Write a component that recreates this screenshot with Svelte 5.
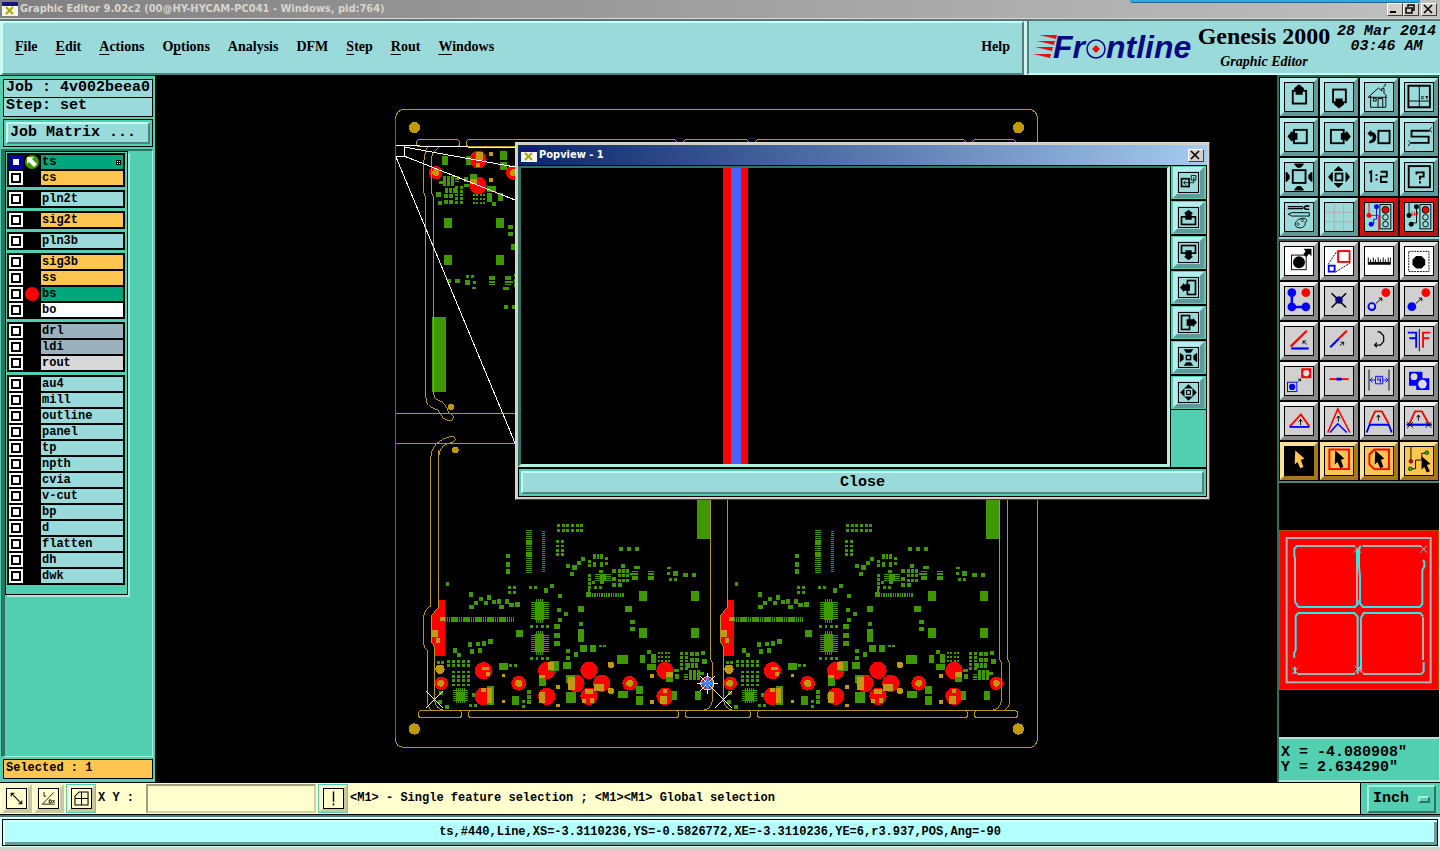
<script lang="ts">
  type Layer = { name: string; tone: string; mark?: string };

  const menus = [
    ['', 'F', 'ile'], ['', 'E', 'dit'], ['', 'A', 'ctions'], ['O', 'p', 'tions'],
    ['Analysis', '', ''], ['DFM', '', ''], ['', 'S', 'tep'], ['', 'R', 'out'], ['', 'W', 'indows']
  ];

  const plain = (names: string[]): Layer[] => names.map((name) => ({ name, tone: 'aqua' }));

  const groups: Layer[][] = [
    [{ name: 'ts', tone: 'green', mark: 'work' }, { name: 'cs', tone: 'orange' }],
    [{ name: 'pln2t', tone: 'aqua' }],
    [{ name: 'sig2t', tone: 'orange' }],
    [{ name: 'pln3b', tone: 'aqua' }],
    [
      { name: 'sig3b', tone: 'orange' }, { name: 'ss', tone: 'orange' },
      { name: 'bs', tone: 'green', mark: 'red' }, { name: 'bo', tone: 'white' }
    ],
    [{ name: 'drl', tone: 'slate' }, { name: 'ldi', tone: 'slate' }, { name: 'rout', tone: 'grey' }],
    plain(['au4', 'mill', 'outline', 'panel', 'tp', 'npth', 'cvia', 'v-cut', 'bp', 'd', 'flatten', 'dh', 'dwk'])
  ];

  // icon bodies, all drawn on a 90 x 90 grid
  const cursor = '33,11 63,38 51,41 59,64 49,68 40,48 31,56';
  const light = `<rect x="48" y="5" width="35" height="78" fill="none" stroke="#000" stroke-width="3"/>
    <circle cx="66" cy="22" r="11" fill="#f00" stroke="#000" stroke-width="3"/>
    <circle cx="66" cy="46" r="9" fill="none" stroke="#000" stroke-width="3"/>
    <circle cx="66" cy="68" r="9" fill="none" stroke="#000" stroke-width="3"/>`;
  const upArrow = (x: number, y: number) =>
    `<path d="M${x} ${y + 18}V${y}M${x - 6} ${y + 7}L${x} ${y}L${x + 6} ${y + 7}" fill="none" stroke="#000" stroke-width="3"/>`;
  const trapezoid = '<path d="M14 54L32 14H54L76 54" fill="none" stroke="#f00" stroke-width="6"/>';
  const diagonal = '<path d="M35 53L54 36M44 36H54V46" fill="none" stroke="#000" stroke-width="3"/>';

  const icons: Record<string, string> = {
    up: '<rect x="25" y="25" width="43" height="41" fill="none" stroke="#000" stroke-width="6"/><path d="M45 4L61 17V22H57V38H34V22H29V17Z"/>',
    down: '<rect x="26" y="21" width="41" height="41" fill="none" stroke="#000" stroke-width="6"/><path d="M45 82L61 69V64H57V50H34V64H29V69Z"/>',
    left: '<rect x="29" y="22" width="41" height="43" fill="none" stroke="#000" stroke-width="6"/><path d="M8 43L20 27H25V32H40V54H25V59H20Z"/>',
    right: '<rect x="19" y="22" width="41" height="43" fill="none" stroke="#000" stroke-width="6"/><path d="M83 43L71 27H66V32H51V54H66V59H71Z"/>',
    home: '<path d="M10 46L43 16L54 26V17H61V33L70 42M18 42V78H67V42M10 46H70M42 78V50H57V78M27 49H36V58H27ZM59 12L66 8M63 6L68 3" fill="none" stroke="#000" stroke-width="3"/>',
    xy: '<path d="M11 9H80V78H11Z" fill="none" stroke="#000" stroke-width="6"/><path d="M46 10V78M11 58H80" stroke="#000" stroke-width="3"/><path d="M52 42L60 52M60 42L52 52M66 42L70 47L75 42M70 47V52" stroke="#000" stroke-width="3"/>',
    back: '<rect x="43" y="25" width="36" height="40" fill="none" stroke="#000" stroke-width="6"/><path d="M8 34L20 22V29C38 29 42 52 28 62L14 66V57C26 54 28 42 20 39V46Z"/>',
    snake: '<path d="M79 25H21V44H76V64H18" fill="none" stroke="#000" stroke-width="6"/><path d="M86 14L79 22L87 30M10 56L18 64L10 74" fill="none" stroke="#000" stroke-width="3"/>',
    fit: '<rect x="25" y="23" width="41" height="41" fill="none" stroke="#000" stroke-width="6"/><path d="M30 2H60V6L50 15H40L30 6ZM30 88H60V84L50 74H40L30 84ZM2 29H6L15 39V50L6 60H2ZM88 29H84L75 39V50L84 60H88Z"/>',
    centre: '<rect x="34" y="34" width="22" height="22" fill="none" stroke="#000" stroke-width="6"/><path d="M43 10L58 23V26H29V23ZM43 80L58 67V64H29V67ZM10 45L22 30H25V60H22ZM80 45L69 30H66V60H69Z"/>',
    ratio: '<path d="M13 31L20 27V62M37 36V42M37 50V56M50 28H70V44H51V61H72" fill="none" stroke="#000" stroke-width="6"/>',
    help: '<rect x="12" y="10" width="68" height="68" fill="none" stroke="#000" stroke-width="6"/><path d="M37 37V30H60V44H48V54M48 58V66" fill="none" stroke="#000" stroke-width="6"/>',
    tools: '<path d="M9 12H58M9 18H58" stroke="#000" stroke-width="4"/><path d="M78 10H66L61 15L66 20H78" fill="none" stroke="#000" stroke-width="5"/><path d="M10 36L22 31H78V42H22Z" fill="none" stroke="#000" stroke-width="3"/><path d="M36 60C44 46 72 46 70 58C60 60 70 68 60 76C46 86 24 76 36 60Z" fill="none" stroke="#000" stroke-width="3"/><circle cx="42" cy="68" r="4" fill="none" stroke="#000" stroke-width="2"/><circle cx="56" cy="56" r="4" fill="none" stroke="#000" stroke-width="2"/>',
    grid: '<path d="M30 0V90M60 0V90M0 30H90M0 60H90" stroke="#b9a9a9" stroke-width="3"/>',
    netRed: `<path d="M13 0V40H44V90" fill="none" stroke="#f00" stroke-width="3"/><path d="M37 12V52H28V68H20" fill="none" stroke="#00f" stroke-width="3"/><circle cx="13" cy="40" r="8" fill="#f00"/><circle cx="37" cy="12" r="8" fill="#00f"/><circle cx="20" cy="68" r="8" fill="#00f"/>${light}`,
    netBlack: `<path d="M13 0V40M37 12V64H20" fill="none" stroke="#000" stroke-width="3"/><path d="M20 38H40M22 28V38M31 28V38M40 28V38" stroke="#f00" stroke-width="3"/><circle cx="13" cy="40" r="8"/><circle cx="37" cy="12" r="8"/><circle cx="20" cy="68" r="8"/>${light}`,
    pad: '<rect x="21" y="26" width="47" height="47" fill="none" stroke="#000" stroke-width="3"/><circle cx="45" cy="49" r="19"/><path d="M59 24L66 14L60 6H85V30L78 22L68 32Z"/>',
    scale: '<rect x="42" y="13" width="37" height="35" fill="none" stroke="#f00" stroke-width="6"/><rect x="12" y="60" width="19" height="19" fill="none" stroke="#00f" stroke-width="6"/><path d="M10 56L38 14M34 80L80 52" stroke="#000" stroke-width="3" stroke-dasharray="7 3"/>',
    ruler: '<path d="M9 57V34H12V48H16V40H19V48H25V34H28V48H32V40H35V48H41V34H44V48H48V40H51V48H57V34H60V48H64V40H67V48H73V34H76V48H80V34H83V57Z"/>',
    select: '<rect x="12" y="14" width="65" height="65" fill="none" stroke="#000" stroke-width="3" stroke-dasharray="6 3"/><path d="M36 29H53L65 41V57L53 69H36L24 57V41Z"/>',
    corner: '<path d="M22 18V64H67" fill="none" stroke="#00f" stroke-width="8"/><circle cx="22" cy="18" r="14" fill="#00f"/><circle cx="22" cy="64" r="14" fill="#00f"/><circle cx="67" cy="64" r="14" fill="#00f"/><circle cx="67" cy="18" r="14" fill="#f00"/>',
    remove: '<circle cx="45" cy="42" r="12" fill="#00f"/><path d="M21 20L68 66M68 20L21 66" stroke="#000" stroke-width="5"/>',
    copy: `<circle cx="22" cy="63" r="11" fill="none" stroke="#00f" stroke-width="6"/><circle cx="67" cy="18" r="14" fill="#f00"/>${diagonal}`,
    move: `<circle cx="22" cy="63" r="14" fill="#00f"/><circle cx="67" cy="18" r="14" fill="#f00"/>${diagonal}`,
    angle: '<path d="M18 63L70 12" stroke="#f00" stroke-width="7"/><path d="M20 69H76" stroke="#00f" stroke-width="7"/><path d="M70 56L58 46M58 55V45H68" fill="none" stroke="#000" stroke-width="3"/>',
    stretch: '<path d="M45 37L70 12" stroke="#f00" stroke-width="7"/><path d="M17 65L45 37" stroke="#00f" stroke-width="7"/><path d="M48 60L60 49M50 49H60V59" fill="none" stroke="#000" stroke-width="3"/>',
    rotate: '<path d="M40 16H48L60 28V46L50 58H31M38 50L31 58L38 65" fill="none" stroke="#000" stroke-width="4"/>',
    mirror: '<path d="M9 18H36V67M14 36H36" fill="none" stroke="#00f" stroke-width="6"/><path d="M46 6V78" stroke="#000" stroke-width="3"/><path d="M82 18H58V67M78 36H58" fill="none" stroke="#f00" stroke-width="6"/>',
    swap: '<rect x="52" y="4" width="32" height="32" fill="#f00"/><circle cx="68" cy="20" r="10" fill="#ddd"/><rect x="8" y="49" width="30" height="30" fill="none" stroke="#00f" stroke-width="3"/><circle cx="23" cy="64" r="10" fill="#00f"/><path d="M40 48L50 39M43 39H50V46" fill="none" stroke="#000" stroke-width="3"/>',
    segment: '<path d="M14 39H76" stroke="#f00" stroke-width="6"/><path d="M37 39H53" stroke="#00f" stroke-width="9"/>',
    spacing: '<path d="M13 8V76M77 8V76" stroke="#000" stroke-width="3"/><path d="M16 42H34M57 42H74M24 34L16 42L24 50M66 34L74 42L66 50M34 30H57V54H34ZM41 33V42H51M49 33V51" fill="none" stroke="#00f" stroke-width="3"/>',
    merge: '<path d="M13 15H56V36H78V74H36V60H13Z" fill="#00f"/><circle cx="29" cy="31" r="11" fill="#ddd"/><circle cx="56" cy="55" r="14" fill="#ddd"/>',
    peakLow: `<path d="M15 63L51 24L79 63" fill="none" stroke="#f00" stroke-width="6"/><path d="M15 64H78" stroke="#00f" stroke-width="6"/>${upArrow(50, 40)}`,
    peakHigh: `<path d="M9 82L41 6L80 82" fill="none" stroke="#f00" stroke-width="5"/><path d="M16 82L41 54L70 82" fill="none" stroke="#00f" stroke-width="5"/>${upArrow(43, 29)}`,
    trapTail: `${trapezoid}<path d="M5 82L15 57H76L86 82" fill="none" stroke="#00f" stroke-width="6"/>${upArrow(43, 26)}`,
    trapLine: `${trapezoid}<path d="M5 57H86" stroke="#00f" stroke-width="7"/><path d="M7 48L26 67M26 48L7 67M66 48L85 67M85 48L66 67" stroke="#000" stroke-width="3"/>${upArrow(43, 26)}`,
    pick: `<rect width="90" height="90"/><polygon points="${cursor}" fill="#ffc64f"/>`,
    pickBox: `<rect x="14" y="8" width="63" height="63" fill="none" stroke="#f00" stroke-width="6"/><polygon points="${cursor}"/>`,
    pickPoly: `<path d="M30 8H77V71H30L14 56V24Z" fill="none" stroke="#f00" stroke-width="6"/><polygon points="${cursor}"/>`,
    pickNet: '<path d="M19 0V44M17 70H34V42H54V20H70" fill="none" stroke="#000" stroke-width="3"/><circle cx="19" cy="46" r="6" fill="#f00" stroke="#000" stroke-width="2"/><circle cx="17" cy="70" r="6" fill="#0c0" stroke="#000" stroke-width="2"/><circle cx="70" cy="18" r="6" fill="#0c0" stroke="#000" stroke-width="2"/><polygon points="54,30 82,55 70,58 80,78 70,82 62,64 53,72"/>',
    popview: '<rect x="12" y="27" width="36" height="37" fill="none" stroke="#000" stroke-width="8"/><path d="M58 12H80V34H58ZM70 20V46H22M32 36L22 46L32 56" fill="none" stroke="#000" stroke-width="4"/>',
    popUp: '<rect x="12" y="42" width="66" height="36" fill="none" stroke="#000" stroke-width="8"/><path d="M45 8L68 26H60V56H30V26H22Z"/>',
    popDown: '<rect x="12" y="12" width="66" height="36" fill="none" stroke="#000" stroke-width="8"/><path d="M45 82L68 64H60V34H30V64H22Z"/>',
    popLeft: '<rect x="40" y="12" width="38" height="66" fill="none" stroke="#000" stroke-width="8"/><path d="M5 45L24 22V30H52V60H24V68Z"/>',
    popRight: '<rect x="12" y="12" width="38" height="66" fill="none" stroke="#000" stroke-width="8"/><path d="M85 45L66 22V30H36V60H66V68Z"/>',
    popFit: '<rect x="35" y="35" width="20" height="20" fill="none" stroke="#000" stroke-width="7"/><path d="M22 6H68L56 22H34ZM22 84H68L56 68H34ZM4 22L22 36V54L4 68ZM86 22L68 36V54L86 68Z"/>',
    popCentre: '<rect x="36" y="36" width="18" height="18" fill="none" stroke="#000" stroke-width="5"/><path d="M45 6L66 26H24ZM45 84L66 64H24ZM6 45L26 24V66ZM84 45L64 24V66Z"/>',
    extent: '<path d="M20 20L70 70M20 36V20H36M70 54V70H54" fill="none" stroke="#000" stroke-width="5"/>',
    slope: '<path d="M16 72L70 16M16 72H74M24 14V34H34M48 52H58V66H48ZM64 52L74 66M74 52L64 66" fill="none" stroke="#000" stroke-width="4"/>',
    mesh: '<path d="M14 76V34L34 14H76V76ZM45 14V76M14 45H76" fill="none" stroke="#000" stroke-width="5"/>',
    bang: '<path d="M45 12V60M45 68V78" stroke="#000" stroke-width="7"/>'
  };

  const viewTools = [
    'up', 'down', 'home', 'xy', 'left', 'right', 'back', 'snake',
    'fit', 'centre', 'ratio', 'help', 'tools', 'grid', 'netRed', 'netBlack'
  ];
  const editTools = [
    'pad', 'scale', 'ruler', 'select', 'corner', 'remove', 'copy', 'move',
    'angle', 'stretch', 'rotate', 'mirror', 'swap', 'segment', 'spacing', 'merge',
    'peakLow', 'peakHigh', 'trapTail', 'trapLine', 'pick', 'pickBox', 'pickPoly', 'pickNet'
  ];
  const popTools = ['popview', 'popUp', 'popDown', 'popLeft', 'popRight', 'popFit', 'popCentre'];

  function toolTone(i: number) {
    if (i < 4) return 'white';
    return i < 20 ? 'grey' : 'orange';
  }

  // board copper: x, y, width, height in thirds of a screen pixel
  const copper: number[][] = [
    [921, -108, 41, 225], [348, 162, 12, 12], [348, 187, 12, 13], [348, 208, 12, 13], [168, 246, 9, 12],
    [687, 142, 12, 11], [711, 142, 12, 11], [735, 142, 12, 11],
    [747, 273, 24, 30], [903, 273, 24, 30], [747, 384, 24, 30], [903, 384, 24, 30],
    [705, 318, 21, 18], [564, 318, 18, 18], [721, 360, 14, 12], [721, 381, 14, 12], [567, 366, 12, 12],
    [564, 387, 18, 39], [570, 435, 21, 21], [600, 435, 18, 21], [627, 435, 8, 6], [639, 435, 9, 6],
    [378, 390, 21, 21], [492, 372, 18, 15], [492, 399, 18, 15], [492, 423, 18, 15],
    [528, 192, 12, 12], [546, 195, 15, 14], [561, 183, 12, 12], [573, 171, 12, 12], [540, 216, 12, 12],
    [480, 252, 12, 12], [462, 264, 12, 14], [504, 282, 12, 12], [501, 324, 12, 12], [522, 336, 12, 12],
    [504, 354, 12, 12], [528, 447, 12, 12], [528, 468, 12, 12], [552, 456, 12, 15],
    [237, 276, 12, 14], [252, 303, 12, 12], [267, 291, 12, 12], [291, 286, 12, 13], [282, 303, 12, 12],
    [306, 300, 12, 12], [321, 297, 12, 14], [345, 297, 12, 14], [327, 315, 15, 12], [357, 309, 15, 12],
    [375, 306, 15, 15], [237, 315, 15, 12], [234, 427, 12, 13], [258, 427, 12, 12], [276, 424, 12, 14],
    [294, 417, 15, 15], [240, 448, 12, 13], [264, 445, 12, 13], [189, 445, 12, 13], [201, 459, 12, 12],
    [354, 258, 8, 9], [369, 258, 8, 9], [354, 273, 8, 9], [369, 273, 8, 9], [418, 258, 8, 8], [432, 258, 8, 8],
    [609, 163, 9, 14], [621, 163, 6, 14], [630, 163, 9, 14], [609, 186, 10, 15], [629, 186, 10, 15],
    [594, 180, 9, 8], [594, 192, 9, 8], [645, 171, 9, 8], [645, 186, 9, 8], [627, 210, 12, 9],
    [630, 222, 18, 18], [594, 222, 8, 10], [594, 234, 8, 10], [594, 246, 8, 9], [594, 258, 8, 8], [594, 268, 6, 12],
    [606, 243, 9, 9], [630, 243, 12, 9], [612, 258, 9, 9], [627, 258, 8, 8],
    [666, 207, 12, 12], [666, 231, 12, 12], [666, 249, 12, 12], [684, 249, 12, 12], [693, 192, 12, 12],
    [726, 213, 18, 4], [720, 220, 24, 4], [726, 228, 18, 12], [732, 198, 18, 9],
    [774, 213, 18, 3], [774, 220, 18, 4], [774, 228, 18, 12],
    [831, 201, 12, 6], [831, 216, 9, 9], [849, 213, 15, 14], [879, 219, 15, 12], [906, 219, 12, 12],
    [837, 235, 9, 9], [852, 235, 9, 9],
    [327, 489, 27, 21], [357, 492, 9, 9], [372, 492, 9, 9], [519, 486, 24, 20], [480, 483, 27, 30],
    [447, 522, 20, 36], [528, 525, 27, 24], [528, 576, 30, 33], [366, 588, 21, 27], [291, 558, 21, 56],
    [411, 570, 12, 12], [411, 585, 12, 12], [411, 600, 12, 12], [396, 600, 9, 8], [396, 615, 9, 8],
    [681, 465, 33, 27], [684, 573, 30, 21], [738, 558, 21, 24], [738, 588, 21, 27], [750, 465, 15, 24],
    [771, 450, 12, 12], [783, 462, 15, 27], [771, 492, 27, 18], [828, 525, 21, 20], [846, 573, 15, 27],
    [915, 573, 18, 27], [936, 477, 15, 15], [934, 453, 11, 12], [901, 455, 12, 12], [916, 455, 12, 12],
    [900, 473, 12, 12], [916, 473, 12, 12], [889, 490, 10, 14], [902, 490, 10, 14], [915, 490, 10, 14],
    [852, 507, 15, 9], [855, 522, 12, 14], [882, 522, 12, 4], [882, 529, 12, 4], [882, 536, 12, 4],
    [897, 510, 8, 30], [909, 510, 8, 30], [921, 510, 8, 30], [930, 516, 12, 10],
    [141, 483, 9, 9], [153, 483, 9, 9], [147, 573, 12, 12], [144, 600, 12, 12], [165, 615, 12, 12],
    [237, 612, 9, 9], [252, 612, 9, 9], [201, 576, 21, 24], [247, 578, 14, 14]
  ];

  function grid(x: number, y: number, cols: number, rows: number, dx: number, dy: number, w: number, h: number) {
    for (let r = 0; r < rows; r++) {
      for (let c = 0; c < cols; c++) copper.push([x + c * dx, y + r * dy, w, h]);
    }
  }

  grid(408, 90, 1, 22, 0, 6, 18, 4);
  grid(408, 123, 1, 2, 0, 32, 18, 12);
  grid(456, 93, 1, 21, 0, 6, 9, 4);
  grid(501, 73, 6, 2, 14, 15, 9, 8);
  grid(498, 121, 2, 4, 15, 13, 8, 8);
  grid(165, 351, 35, 1, 6, 0, 3, 15);
  grid(186, 351, 5, 1, 36, 0, 17, 15);
  grid(588, 277, 3, 1, 5, 0, 5, 14);
  grid(606, 279, 14, 1, 7, 0, 4, 12);
  grid(684, 208, 3, 3, 12, 14, 9, 10);
  for (const y of [306, 403]) {
    copper.push([435, y, 27, 54]);
    grid(423, y + 1, 1, 9, 0, 6, 12, 3);
    grid(462, y + 1, 1, 9, 0, 6, 15, 3);
    grid(438, y - 9, 4, 1, 6, 0, 3, 72);
    grid(421, y + 69, 4, 1, 16, 0, 8, 9);
  }
  grid(615, 222, 1, 4, 0, 6, 48, 3);
  grid(190, 570, 1, 6, 0, 6, 44, 3);
  grid(198, 564, 5, 1, 6, 0, 3, 46);
  grid(171, 480, 5, 2, 15, 13, 8, 8);
  grid(186, 512, 4, 4, 15, 13, 8, 8);
  grid(804, 457, 4, 3, 10, 12, 6, 6);
  grid(871, 457, 2, 5, 13, 11, 9, 8);

  const reds = [
    [280, 512, 26], [280, 589, 26], [386, 550, 22], [470, 512, 26], [470, 589, 26], [558, 550, 26], [597, 511, 26],
    [635, 550, 26], [597, 589, 26], [719, 550, 22], [825, 512, 26], [825, 589, 26], [154, 550, 20], [952, 550, 20]
  ];
  const drills = [
    [150, 508, 14], [152, 550, 10], [386, 550, 11], [663, 495, 10], [663, 573, 10], [719, 550, 10], [952, 550, 10]
  ];
  const overlaps = [
    [125, 390, 19, 21], [137, 414, 13, 15], [150, 351, 14, 12], [276, 501, 20, 9], [288, 516, 12, 12],
    [273, 563, 15, 12], [291, 565, 15, 44], [336, 521, 9, 11], [336, 599, 9, 11], [473, 487, 20, 24],
    [447, 525, 18, 10], [447, 576, 18, 34], [498, 555, 12, 12], [498, 612, 12, 9], [535, 531, 20, 38],
    [612, 552, 30, 22], [586, 567, 22, 15], [576, 598, 12, 12], [600, 594, 12, 15], [780, 522, 12, 12],
    [780, 600, 12, 12], [819, 567, 12, 12], [810, 588, 21, 24], [828, 516, 20, 16]
  ];
  const slots = [[418, 461], [468, 678], [685, 750], [757, 967], [974, 1017]];
</script>

{#snippet icon(name: string)}
  <svg class="icon" viewBox="0 0 90 90" aria-hidden="true">{@html icons[name]}</svg>
{/snippet}

{#snippet appMark()}
  <svg class="app-mark" viewBox="0 0 16 14" aria-hidden="true">
    <rect width="16" height="14" fill="#f4f4f4" />
    <rect width="16" height="4" fill="#15157a" />
    <path d="M4 5L11 12M11 5L4 12" stroke="#a8a800" stroke-width="2" />
  </svg>
{/snippet}

{#snippet board()}
  <path d="M146 300H165V467H134V440L125 427V347L146 320Z" fill="#f00" />
  {#each reds as [x, y, r]}<circle cx={x} cy={y} {r} fill="#f00" />{/each}
  {#each copper as [x, y, w, h]}<rect {x} {y} width={w} height={h} fill="#409800" />{/each}
  <g fill="#f00">
    <path d="M254 512a26 26 0 0 1 52 0v10h-52ZM444 512a26 26 0 0 1 30-25v50a26 26 0 0 1-30-25ZM254 589a26 26 0 0 1 37-24v48a26 26 0 0 1-37-24Z" />
    <path d="M555 525h10l14 14-8 30-16 6ZM800 512a26 26 0 0 1 50-5l-4 14-20 8-14 5Z" />
  </g>
  {#each overlaps as [x, y, w, h]}<rect {x} {y} width={w} height={h} fill="#c09a10" />{/each}
  {#each drills as [x, y, r]}<circle cx={x} cy={y} {r} fill="#c09a00" />{/each}
{/snippet}

{#snippet outline()}
  <path d="M146 -150V320L125 347V427L134 440V600Q136 625 160 631H940Q962 628 967 604V487L961 475V-150" />
{/snippet}

<div class="app">
  <header class="titlebar">
    {@render appMark()}
    <h1>Graphic Editor 9.02c2 (00@HY-HYCAM-PC041 - Windows, pid:764)</h1>
    <div class="window-buttons">
      <button aria-label="Minimize"><svg viewBox="0 0 12 10"><path d="M2 8H8" stroke="#000" stroke-width="2" /></svg></button>
      <button aria-label="Restore"><svg viewBox="0 0 12 10"><path d="M4 3V1H10V6H8M2 4H8V9H2Z" fill="none" stroke="#000" stroke-width="1.5" /></svg></button>
      <button class="apart" aria-label="Close window"><svg viewBox="0 0 12 10"><path d="M2 1L10 9M10 1L2 9" stroke="#000" stroke-width="1.6" /></svg></button>
    </div>
    <div class="tab-edge"></div>
  </header>

  <div class="top">
    <nav class="menubar">
      {#each menus as [before, key, after]}
        <button>{before}{#if key}<u>{key}</u>{/if}{after}</button>
      {/each}
      <button class="help">Help</button>
    </nav>
    <section class="brand">
      <svg class="logo" viewBox="0 0 162 34" role="img" aria-label="Frontline">
        <path d="M6 5H24L23 9ZM4 11H22L21 15ZM2 17H20L19 21ZM0 24H18L17 28Z" fill="#e81010" />
        <text x="20" y="28">Fr</text>
        <circle cx="63" cy="19" r="9" fill="none" stroke="#0a0a80" stroke-width="1.500" />
        <path d="M63 15L67 19L63 23L59 19Z" fill="#e81010" />
        <text x="73" y="28">ntline</text>
      </svg>
      <div class="product">
        <strong>Genesis 2000</strong>
        <em>Graphic Editor</em>
      </div>
      <div class="clock"><span>28 Mar 2014</span><span>03:46 AM</span></div>
    </section>
  </div>

  <main>
    <aside class="side">
      <div class="fact">Job : 4v002beea0</div>
      <div class="fact">Step: set</div>
      <div class="matrix"><button>Job Matrix ...</button></div>
      <div class="layers-area">
        <div class="layers">
          {#each groups as group}
            <div class="group">
              {#each group as layer}
                <label class="layer">
                  <input type="checkbox" checked={layer.mark === 'work'} />
                  <span class="mark">
                    {#if layer.mark === 'work'}
                      <svg viewBox="0 0 14 14"><circle cx="7" cy="7" r="7" fill="#409800" /><path d="M2 2H9L7 4L12 9L9 12L4 7L2 9Z" fill="#fff" /></svg>
                    {:else if layer.mark === 'red'}
                      <svg viewBox="0 0 14 14"><circle cx="7" cy="7" r="7" fill="#f00" /></svg>
                    {/if}
                  </span>
                  <span class="name {layer.tone}">
                    {layer.name}
                    {#if layer.mark === 'work'}
                      <svg class="snap" viewBox="0 0 5 5"><rect width="5" height="5" /><path d="M1 1h1v1h-1zM3 1h1v1h-1zM1 3h1v1h-1zM3 3h1v1h-1z" fill="#fff" /></svg>
                    {/if}
                  </span>
                </label>
              {/each}
            </div>
          {/each}
        </div>
      </div>
      <div class="selected">Selected : 1</div>
    </aside>

    <section class="canvas">
      <svg class="drawing" viewBox="155 75 1122 707" shape-rendering="crispEdges" role="img" aria-label="Panel drawing">
        <g fill="none" stroke="#b89420" stroke-width="1">
          <path d="M395.5 738V118.5Q396 109.5 405 109.5H1028Q1037.5 109.5 1037.5 119V738Q1037.5 747.5 1028 747.5H405Q395.5 747.5 395.5 738" />
          <path d="M396 413.5H1037M396 443.5H1037" />
          {#each slots as [a, b]}
            <rect x={a + 0.5} y="710.5" width={b - a} height="7" rx="3" />
            <rect x={1433 - b + 0.5} y="139.5" width={b - a} height="7" rx="3" />
          {/each}
        </g>
        <rect x="395" y="119" width="1" height="619" fill="#4a5ae0" />
        <g transform="translate(390 500) scale(.33333)">
          <g transform="translate(1089 -432) scale(-1)">{@render board()}</g>
          {@render board()}
          <g transform="translate(867 0)">{@render board()}</g>
          <g fill="none" stroke="#b89420" stroke-width="3">
            {@render outline()}
            <g transform="translate(867 0)">{@render outline()}</g>
            <path d="M122 0V318Q102 330 101 350V430Q102 446 113 451V612L122 631M1852 0V475L1859 490V600Q1860 620 1845 631" />
            <path d="M122 0V-125C124 -165 150 -185 190 -192Q202 -180 188 -172C160 -170 148 -155 146 -125V0" />
            <path d="M146 -1058Q126 -1045 125 -1025V-920L131 -908V-320Q132 -302 148 -298C166 -290 170 -278 176 -262L190 -252Q190 -236 176 -237L160 -246L145 -268V-270Q108 -278 107 -310V-905L101 -925V-1000Q101 -1040 112 -1058" />
          </g>
          <g fill="#c09a00">
            <circle cx="183" cy="-279" r="9" /><circle cx="196" cy="-150" r="10" />
            <circle cx="73" cy="687" r="17" /><circle cx="1885" cy="687" r="17" />
            <circle cx="73" cy="-1117" r="17" /><circle cx="1885" cy="-1117" r="17" />
          </g>
          <g stroke="#fff" stroke-width="3" fill="none">
            <path d="M108 573L158 623M158 573L108 623M975 573L1025 623M1025 573L975 623" />
            <circle cx="952" cy="550" r="20" stroke="#ccc" />
            <path d="M920 550H984M952 518V582M930 528L974 572M974 528L930 572" />
            <path d="M936 550H968M952 534V566" stroke="#4a80ff" stroke-width="8" />
          </g>
        </g>
        <path d="M396 145.5H404.5V156.5H396M396 145.5L515 148M404 147L515 167M404 156L515 200M396 157L515 443" fill="none" stroke="#fff" />
      </svg>

      <section class="popup" aria-label="Popview - 1">
        <header>
          {@render appMark()}
          <h2>Popview - 1</h2>
          <button aria-label="Close popview"><svg viewBox="0 0 12 10"><path d="M2 1L10 9M10 1L2 9" stroke="#000" stroke-width="1.6" /></svg></button>
        </header>
        <div class="pop-body">
          <div class="pop-view"><div class="track"></div></div>
          <div class="pop-tools">
            {#each popTools as name}
              <div class="pop-cell"><button class="tool aqua" aria-label={name}>{@render icon(name)}</button></div>
            {/each}
          </div>
        </div>
        <div class="pop-foot"><button>Close</button></div>
      </section>
    </section>

    <aside class="tools">
      <div class="tool-grid view">
        {#each viewTools as name, i}
          <button class="tool aqua" class:alert={i > 13} aria-label={name}>{@render icon(name)}</button>
        {/each}
      </div>
      <div class="tool-grid edit">
        {#each editTools as name, i}
          <button class="tool {toolTone(i)}" aria-label={name}>{@render icon(name)}</button>
        {/each}
      </div>
      <div class="preview">
        <svg viewBox="0 0 480 480" role="img" aria-label="Panel overview">
          <rect x="1" y="1" width="478" height="478" fill="#f00" stroke="#a86000" stroke-width="3" />
          <rect x="23" y="24" width="432" height="433" fill="none" stroke="#a8b4b4" stroke-width="6" />
          <g fill="none" stroke="#a8b4b4" stroke-width="6">
            <path d="M54 48H228M48 80V215M234 60V222M250 48H426M56 432H228M246 268V420M252 432H428M432 262V390" />
          </g>
          <g fill="none" stroke="#30e8e8" stroke-width="6">
            <path d="M46 82V56L54 48H60M48 215L58 231H228L236 222V210M234 60V100" />
            <path d="M244 48L240 60V110L243 140V220L252 231H422L430 222V120L436 110V96L432 90" />
            <path d="M48 432V410M46 384L45 370L50 360V258L58 249H226L236 260V432" />
            <path d="M246 380V420M244 268L254 249H424L432 260M434 396V424L428 432" />
          </g>
          <path d="M224 46L246 68M246 46L224 68M424 46L444 68M444 46L424 68M38 412L58 434M58 412L38 434M226 406L248 428M248 406L226 428M240 414L258 434" stroke="#7adada" stroke-width="3" />
        </svg>
      </div>
      <div class="coords"><span>X = -4.080908"</span><span>Y = 2.634290"</span></div>
    </aside>
  </main>

  <div class="command">
    <button class="small cream" aria-label="extent">{@render icon('extent')}</button>
    <button class="small cream" aria-label="slope">{@render icon('slope')}</button>
    <div class="small-cell"><button class="small cream" aria-label="mesh">{@render icon('mesh')}</button></div>
    <label for="xy">X Y :</label>
    <input id="xy" type="text" />
    <div class="small-cell"><button class="small cream" aria-label="alert">{@render icon('bang')}</button></div>
    <p>&lt;M1&gt; - Single feature selection ; &lt;M1&gt;&lt;M1&gt; Global selection</p>
    <div class="units"><button>Inch <i></i></button></div>
  </div>

  <footer class="status"><output>ts,#440,Line,XS=-3.3110236,YS=-0.5826772,XE=-3.3110236,YE=6,r3.937,POS,Ang=-90</output></footer>
</div>

<style>
  :global(body) {
    background: #d4d0c8;
  }

  .app {
    --aqua: #9bdada;
    --teal: #52cfb0;
    --lit: #c4fff4;
    --shade: #4f8380;
    display: flex;
    flex-direction: column;
    min-height: 100vh;
    box-sizing: border-box;
    padding-bottom: 4px;
    font: bold 12px/14px "Liberation Mono", monospace;
    color: #000;
  }

  .app *,
  .app :global(svg) {
    box-sizing: border-box;
  }

  button {
    padding: 0;
    margin: 0;
    border: 0;
    font: inherit;
    color: inherit;
    border-radius: 0;
  }

  svg {
    display: block;
  }

  .titlebar {
    position: relative;
    display: flex;
    align-items: center;
    height: 19px;
    padding: 0 3px 0 2px;
    border-bottom: 1px solid #d8d8d8;
    background: linear-gradient(90deg, #808080, #c0c0c0);
  }

  .app-mark {
    width: 16px;
    height: 14px;
    margin-right: 2px;
  }

  h1,
  h2 {
    flex: 1;
    margin: 0;
    font: bold 11px/14px "DejaVu Sans Condensed", "DejaVu Sans", sans-serif;
    color: #d8d4cc;
  }

  .window-buttons {
    display: flex;
  }

  .window-buttons button,
  .popup header button {
    width: 16px;
    height: 13px;
    border: 1px solid;
    border-color: #fff #404040 #404040 #fff;
    background: #d4d0c8;
  }

  .window-buttons .apart {
    margin-left: 2px;
  }

  .window-buttons svg,
  .popup header button svg {
    width: 12px;
    height: 10px;
  }

  .tab-edge {
    position: absolute;
    top: 0;
    right: 20px;
    width: 290px;
    height: 3px;
    border-bottom: 1px solid #186888;
    border-radius: 0 0 4px 4px;
    background: #30a8e0;
  }

  .top {
    display: flex;
    height: 56px;
    gap: 3px;
    padding-left: 1px;
    background: #d0f4f0;
    border-top: 2px solid #5a7878;
  }

  .menubar {
    flex: 1;
    display: flex;
    align-items: center;
    gap: 18px;
    padding: 0 12px 2px;
    border: 2px solid;
    border-color: var(--lit) var(--shade) var(--shade) var(--lit);
    background: var(--aqua);
    font: bold 14px/18px "Liberation Serif", serif;
  }

  .menubar button {
    background: none;
  }

  .menubar u {
    text-underline-offset: 3px;
  }

  .help {
    margin-left: auto;
  }

  .brand {
    display: flex;
    width: 413px;
    padding: 0 4px 0 4px;
    background: var(--aqua);
    border-left: 2px solid var(--shade);
    border-bottom: 2px solid var(--lit);
  }

  .logo {
    width: 162px;
    height: 34px;
    margin-top: 9px;
  }

  .logo text {
    font: italic bold 32px "Liberation Sans", sans-serif;
    fill: #0a0a80;
  }

  .product {
    flex: 1;
    padding-right: 4px;
    text-align: center;
    font-family: "Liberation Serif", serif;
  }

  .product strong {
    display: block;
    font-size: 24px;
    line-height: 30px;
    white-space: nowrap;
  }

  .product em {
    font-size: 14px;
    line-height: 22px;
  }

  .clock {
    display: flex;
    flex-direction: column;
    align-items: center;
    padding-top: 3px;
    font-size: 15px;
    line-height: 15px;
    font-style: italic;
    white-space: nowrap;
  }

  main {
    flex: 1;
    display: flex;
    background: #000;
  }

  .side {
    display: flex;
    flex-direction: column;
    width: 155px;
    padding: 3px 2px 3px 3px;
    background: var(--teal);
    border-top: 1px solid #103830;
  }

  .fact {
    height: 19px;
    margin-bottom: -1px;
    padding: 0 2px;
    border: 1px solid #000;
    background: var(--aqua);
    font-size: 15px;
    line-height: 16px;
    white-space: nowrap;
  }

  .fact + .fact {
    height: 20px;
  }

  .matrix {
    margin-top: 3px;
    padding: 2px;
    border: 1px solid #000;
  }

  .matrix button {
    width: 100%;
    height: 22px;
    padding-left: 2px;
    border: 2px solid;
    border-color: var(--lit) var(--shade) var(--shade) var(--lit);
    background: var(--aqua);
    font-size: 15px;
    line-height: 16px;
    text-align: left;
  }

  .layers-area {
    flex: 1;
    margin: 2px 0 2px -2px;
    border: solid;
    border-width: 2px 1px 1px 4px;
    border-color: #2f7363 #a8f0dc #a8f0dc #2f7363;
  }

  .layers {
    display: flex;
    flex-direction: column;
    gap: 3px;
    width: 123px;
    padding: 1px 2px 9px 1px;
    border: 1px solid #000;
    box-shadow: 2px 2px #a8e8d8;
  }

  .group {
    display: flex;
    flex-direction: column;
    gap: 2px;
    padding: 2px;
    background: #000;
  }

  .layer {
    display: flex;
    height: 14px;
  }

  .layer input {
    appearance: none;
    width: 14px;
    height: 14px;
    margin: 0;
    border: 2px solid #fff;
    outline: 2px solid #000;
    outline-offset: -4px;
    background: #fff;
  }

  .layer input:checked {
    border-color: #00009c;
    outline-color: #00009c;
  }

  .mark {
    width: 18px;
    padding-left: 2px;
  }

  .mark svg {
    width: 14px;
    height: 14px;
  }

  .name {
    flex: 1;
    display: flex;
    justify-content: space-between;
    align-items: center;
    padding: 0 2px 0 1px;
    line-height: 14px;
  }

  .snap {
    width: 5px;
    height: 5px;
  }

  .name.aqua {
    background: var(--aqua);
  }

  .name.green {
    background: #00a67c;
  }

  .name.orange {
    background: #ffc64f;
  }

  .name.white {
    background: #fff;
  }

  .name.slate {
    background: #9bb2bc;
  }

  .name.grey {
    background: #d8d8d8;
  }

  .selected {
    height: 20px;
    padding: 0 2px;
    border: 1px solid #000;
    background: #ffc64f;
    line-height: 17px;
  }

  .canvas {
    position: relative;
    flex: 1;
  }

  .drawing {
    position: absolute;
    inset: 0;
    width: 100%;
    height: 100%;
  }

  .popup {
    position: absolute;
    left: 360px;
    top: 67px;
    width: 695px;
    padding: 2px;
    border: 1px solid;
    border-color: #d8d8d8 #404040 #404040 #d8d8d8;
    background: #d4d0c8;
  }

  .popup header {
    display: flex;
    align-items: center;
    height: 20px;
    padding: 0 3px 0 3px;
    background: linear-gradient(90deg, #0a246a, #a6caf0);
  }

  .popup h2 {
    color: #fff;
  }

  .pop-body {
    display: flex;
    height: 303px;
    border: 1px solid #000;
    border-width: 1px 1px 1px 0;
    background: #000;
  }

  .pop-view {
    flex: 1;
    padding-left: 202px;
    border: solid;
    border-width: 2px 3px 3px 3px;
    border-color: #2f7363 #b4f0e0 #b4f0e0 #2f7363;
    background: #000;
  }

  .track {
    width: 25px;
    height: 100%;
    border: solid #f00;
    border-width: 0 7px 0 8px;
    background: #4864ff;
  }

  .pop-tools {
    display: flex;
    flex-direction: column;
    gap: 2px;
    width: 35px;
    margin-left: 1px;
    border-bottom: 57px solid var(--teal);
  }

  .pop-cell {
    height: 33px;
    padding: 1px 2px;
    background: var(--teal);
  }

  .pop-cell .tool {
    width: 31px;
    height: 31px;
  }

  .pop-cell .icon {
    width: 21px;
    height: 21px;
    margin: auto;
  }

  .pop-foot {
    padding: 2px;
    border: 1px solid #000;
    background: var(--teal);
  }

  .pop-foot button {
    display: block;
    width: 100%;
    height: 23px;
    border: 2px solid;
    border-color: var(--lit) var(--shade) var(--shade) var(--lit);
    background: var(--aqua);
    font-size: 15px;
    line-height: 18px;
  }

  .tools {
    display: flex;
    flex-direction: column;
    width: 163px;
    border: solid;
    border-width: 2px 1px 0 2px;
    border-color: #2f6e5e #b4f0e0 #b4f0e0 #2f6e5e;
  }

  .tool-grid {
    display: grid;
    grid-template-columns: repeat(4, 38px);
    gap: 2px;
    padding: 1px;
    background: #000;
  }

  .view {
    border-bottom: 2px solid #9bdada;
  }

  .edit {
    border-top: 2px solid #505050;
    border-bottom: 2px solid var(--shade);
  }

  .tool {
    width: 38px;
    height: 38px;
    border: 4px solid;
  }

  .icon {
    width: 30px;
    height: 30px;
    border: 1px solid #000;
  }

  .tool.aqua {
    background: var(--aqua);
    border-color: #b4eeee #5f9a98 #5f9a98 #b4eeee;
  }

  .tool.alert {
    border-color: #e01010 #b01818 #b01818 #e01010;
  }

  .tool.white {
    background: #fff;
    border-color: #e8e8e8 #909090 #909090 #e8e8e8;
  }

  .tool.grey {
    background: #d0d0d0;
    border-color: #f0f0f0 #888 #888 #e4e4e4;
  }

  .tool.orange {
    background: #ffc64f;
    border-color: #ffe098 #a87820 #a87820 #ffe098;
  }

  .preview {
    flex: 1;
    display: flex;
    align-items: center;
    justify-content: center;
  }

  .preview svg {
    width: 160px;
    height: 160px;
  }

  .coords {
    display: flex;
    flex-direction: column;
    height: 45px;
    padding: 6px 2px 0;
    border-top: 2px solid #a8e8d8;
    border-bottom: 2px solid #a8e8d8;
    background: var(--teal);
    font-size: 15px;
    line-height: 15px;
  }

  .command {
    display: flex;
    height: 33px;
    padding: 1px 0 1px 2px;
    border: solid #000;
    border-width: 1px 0 1px 0;
    gap: 2px;
    background: #ffffce;
  }

  .small {
    width: 30px;
    height: 29px;
    border: 4px solid;
  }

  .small.cream {
    background: #ffffce;
    border-color: #f8f8d0 #c8c8a0 #c8c8a0 #f8f8d0;
  }

  .small .icon {
    width: 21px;
    height: 21px;
  }

  .small-cell {
    width: 30px;
    padding: 1px;
    background: var(--teal);
  }

  .small-cell .small {
    width: 28px;
    height: 27px;
    border-width: 3px;
  }

  .small-cell .icon {
    margin: auto;
  }

  .command label {
    width: 46px;
    line-height: 29px;
    white-space: nowrap;
  }

  .command input {
    width: 170px;
    padding: 0 3px;
    border: 2px solid;
    border-color: #a0a078 #d0d0a8 #d0d0a8 #a0a078;
    border-radius: 0;
    background: #ffffce;
    font: inherit;
  }

  .command p {
    flex: 1;
    margin: 0;
    line-height: 29px;
  }

  .units {
    width: 80px;
    margin: -1px 0;
    padding: 2px 4px 1px 6px;
    border-left: 1px solid #000;
    background: var(--teal);
  }

  .units button {
    display: flex;
    align-items: center;
    justify-content: space-between;
    width: 100%;
    height: 28px;
    padding: 0 4px;
    border: 2px solid;
    border-color: #a0f0dc #2f7363 #2f7363 #a0f0dc;
    background: var(--teal);
    font-size: 15px;
  }

  .units i {
    width: 12px;
    height: 7px;
    border: 2px solid;
    border-color: #a0f0dc #2f7363 #2f7363 #a0f0dc;
  }

  .status {
    height: 32px;
    padding: 2px;
    border-top: 2px solid #5a7878;
    background: #dcffff;
  }

  .status output {
    display: block;
    height: 27px;
    border: 1px solid #000;
    box-shadow: inset 2px 2px #d8ffff, inset -3px -3px #6a9c9c;
    background: #b4ffff;
    line-height: 24px;
    text-align: center;
  }
</style>
